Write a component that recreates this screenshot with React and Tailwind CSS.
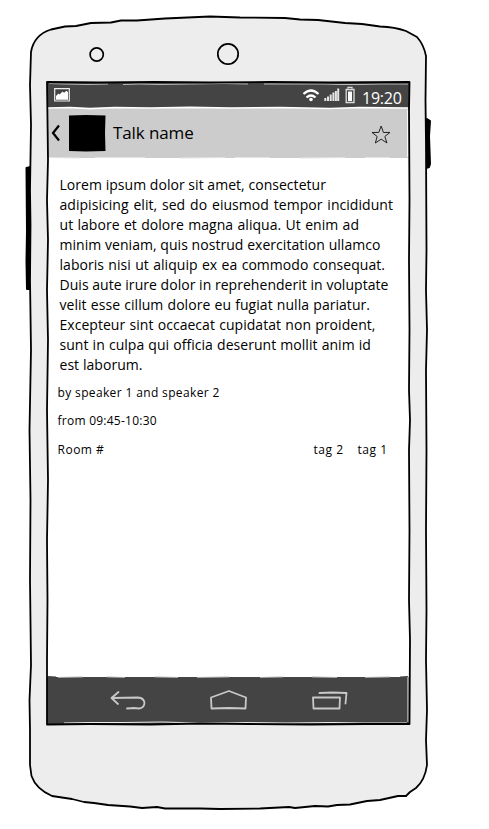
const BODY_LINES = [
  ["Lorem ipsum dolor sit amet, consectetur", "w-[266.5px]"],
  ["adipisicing elit, sed do eiusmod tempor incididunt", "w-[333.5px]"],
  ["ut labore et dolore magna aliqua. Ut enim ad", "w-[299.5px]"],
  ["minim veniam, quis nostrud exercitation ullamco", "w-[321px]"],
  ["laboris nisi ut aliquip ex ea commodo consequat.", "w-[325.5px]"],
  ["Duis aute irure dolor in reprehenderit in voluptate", "w-[329px]"],
  ["velit esse cillum dolore eu fugiat nulla pariatur.", "w-[310.5px]"],
  ["Excepteur sint occaecat cupidatat non proident,", "w-[316px]"],
  ["sunt in culpa qui officia deserunt mollit anim id", "w-[311.5px]"],
  ["est laborum.", "w-[83px]"],
];

// The phone's hand-drawn shell, side buttons and camera holes.
function PhoneShell() {
  return (
    <svg className="absolute inset-0" width="489" height="829" viewBox="0 0 489 829" fill="none" stroke="#000" strokeWidth="2" strokeLinejoin="round">
      <path d="M26.500 168l4-1v122l-3.500 0-.5-28 .5-30z" fill="#000" />
      <path d="M427 119l3 2-1 15 1 28-1 3-3 1z" fill="#000" />
      <path
        fill="#ededed"
        strokeWidth="1.8"
        d="M31 52C33 40 40 33 51 29.500L65 26.500L76 26L91 23L111 22.500L121 20.500L137 20.500L165 18.500L210 16.500L240 17.500L285 18L300 19.500L318 20L345 23L362 24L380 26.500Q395 27 406 31L417 37Q424 45 426 56L425.500 100L426 145L426.500 250L426 290L427 330L426 370L426.500 450L426 530L426.500 610L426 660L427 710L426 740L427 765Q425 780 416 788L410 792L406 796L398 796L380 800L367 801L350 804.500L337 805L328 806.500L315 806L295 808L289 807L260 808.500L220 809L200 808.500L165 808.500L157 807L142 808L130 806.500L108 805L94 803L84 802L72 799L52 796Q36 789 31.500 776L30 765L30 730L29.500 700L31 665L30 580L30.500 500L29.500 430L31 350L30 280L30.500 225L30 190L31 125L30 85Z"
      />
      <circle cx="96.700" cy="54.500" r="6.600" strokeWidth="1.700" />
      <circle cx="228" cy="54" r="10.200" strokeWidth="1.700" />
    </svg>
  );
}

// Sketchy outline and seams of the screen, drawn above its panels.
function ScreenOutline() {
  return (
    <svg className="pointer-events-none absolute inset-0" width="489" height="829" viewBox="0 0 489 829" fill="none" strokeLinejoin="round">
      <path stroke="#bbb" strokeWidth="1" d="M49 83.500l15 .5 24 .5 20-.5M123 84.500l16-.5 20 .5 30-.5 35-.5 24 .5M264 84l30 0 30 0 16 .5 20 0 20-.5 28 0" />
      <path stroke="#fff" strokeWidth="1.700" d="M48 108L70 107.500L90 108.700L115 107.500L150 108L190 107.300L230 108L280 107.500L330 108.500L360 107.500L408 108M408 110L408 157" />
      <path stroke="#e4e4e4" strokeWidth="1" d="M49 157.500L80 158M95 157.500L145 157.500M180 158L225 157.500M235 157.500L270 157.500M300 158L345 157.500M365 157.500L390 157.500" />
      <path stroke="#444" strokeWidth="1" d="M48 676.500L56 677M400 677L408 676.500" />
      <path stroke="#aaa" strokeWidth="1" d="M58 677.500L83 677M107 677L125 677.500M155 677L178 677.500M197 677.500L229 677M260 677.500L283 677M312 677L337 677.500M365 677.500L390 677" />
      <path stroke="#eee" strokeWidth="1" d="M64 723L90 722.500L122 722.500L162 722L201 723L245 722.500L286 723L332 722.500L362 723L407 723M408 677L408 722" />
      <path stroke="#000" strokeWidth="1.800" d="M47 82L100 82.500L155 82L210 82.500L270 82L330 82.500L409.500 82L409 110L409.500 200L409 260L409.500 330L409 390L410 420L409 450L409.500 530L409 600L410 640L409.500 724L365 724L310 724.500L250 724L200 723.500L150 724.500L90 724L47 724.500L47 660L47.500 600L47 540L48 480L47 410L48 340L47 290L48 240L47 200L48 160L47.500 120Z" />
    </svg>
  );
}

function PictureIcon() {
  return (
    <svg width="16" height="14" viewBox="0 0 16 14">
      <path d="M.7 .7h14.600v12.300H.7z" fill="none" stroke="#eee" strokeWidth="1.200" />
      <path d="M2 11.800V8L4.500 5.500l1.200 1L8.500 3.500l1.500 1.300 2.500-2 1.500 1.500v7.500z" fill="#fff" />
    </svg>
  );
}

function StatusIcons() {
  return (
    <svg width="54" height="20" viewBox="302 85 54 20" fill="none" stroke="#fff">
      <path strokeWidth="2.300" d="M303.500 94Q311 87 318.500 94M306.500 97.500Q311 93.500 315.500 97.500" />
      <circle cx="311" cy="99.500" r="1.800" fill="#fff" stroke="none" />
      <path stroke="#e4e4e4" strokeWidth="2" d="M325.300 101v-3M328 101v-4.500M330.700 101v-6.500M333.400 101v-8.500M335.900 101v-10M338.200 101v-12.500" />
      <path strokeWidth="1.300" stroke="#ddd" d="M348 88.500v-1.200h4v1.200M346.200 89.500h7.800v13h-7.800z" />
      <path d="M348 91.500h4v9.500h-4z" fill="#fff" stroke="none" />
    </svg>
  );
}

function NavIcons() {
  return (
    <svg width="362" height="46" viewBox="47 677 362 46" fill="none" stroke="#c8c8c8" strokeWidth="1.800" strokeLinejoin="round" strokeLinecap="round">
      <path d="M118.500 692L111.500 698L118 704M112 698L138 697.500Q144 698 144.500 703Q144 708 139 708.500L134 708L127 708.500" />
      <path d="M211 697.500L229 691L246 697.500L245.500 708.500L229 708L211.500 708.500Z" />
      <path d="M313 697.500L340 697.500L339.500 708.500L313.500 708.500ZM319.500 693L332 692.500L346.500 693L345.500 703.500" />
    </svg>
  );
}

// Spreads one line of copy over a fixed measure.
function Line({ text, width }) {
  return (
    <div className={`flex h-5 items-center justify-between whitespace-nowrap ${width}`}>
      {text.split(" ").map((word, i) => (
        <span key={i}>{word}</span>
      ))}
    </div>
  );
}

export default function App() {
  return (
    <div className="relative h-[829px] w-[489px] overflow-hidden bg-white pl-[47px] pt-[82px] font-['Open_Sans','Noto_Sans',sans-serif] text-black">
      <PhoneShell />
      <main className="relative flex h-[642px] w-[362px] flex-col bg-white">
        <div className="flex h-[26px] shrink-0 items-center justify-between bg-[#444] pl-[7px] pr-[7px] text-white">
          <PictureIcon />
          <div className="flex items-center gap-[6px]">
            <StatusIcons />
            <span className="flex h-5 w-[40px] items-center pt-[6px] text-base tracking-[-0.25px]">19:20</span>
          </div>
        </div>
        <header className="flex h-[50px] shrink-0 items-center bg-[#ccc] pl-1 pr-[18px]">
          <svg width="9" height="18" viewBox="0 0 9 18" fill="none" stroke="#000" strokeWidth="2.200">
            <path d="M8 1.500L2 9L8 16.500" />
          </svg>
          <svg className="ml-2" width="38" height="37" viewBox="0 0 38 37">
            <path d="M1 .5L18 0L37.500 .5L37 18L37.500 36L18 36.500L1 36L1 18Z" />
          </svg>
          <h1 className="ml-[7px] text-[17px] tracking-[-0.1px]">Talk name</h1>
          <svg className="ml-auto mt-[3px]" width="20" height="20" viewBox="0 0 20 20" fill="none" stroke="#222" strokeWidth="1">
            <path d="M10.200 1L12.400 7.500L19 7.400L13.800 11.500L16 18L10.200 14.200L4.300 18L6.200 11.500L1 7.500L7.800 7.400Z" />
          </svg>
        </header>
        <section className="grow">
          <div className="ml-[12.5px] mt-4 text-[14px] tracking-[0.04px]">
            {BODY_LINES.map(([text, width]) => (
              <Line key={text} text={text} width={width} />
            ))}
          </div>
          <div className="ml-[10.5px] text-[12px] tracking-[0.36px]">
            <p className="mt-[9px] flex h-5 items-center">by speaker 1 and speaker 2</p>
            <p className="mt-2 flex h-5 items-center tracking-[0.25px]">from 09:45-10:30</p>
            <div className="mt-[9px] flex h-5 w-[330px] items-center">
              <span className="tracking-[0.5px]">Room #</span>
              <span className="ml-auto tracking-[0.5px]">tag 2</span>
              <span className="ml-[14px] tracking-[0.5px]">tag 1</span>
            </div>
          </div>
        </section>
        <nav className="h-[47px] shrink-0 bg-[#444]">
          <NavIcons />
        </nav>
      </main>
      <ScreenOutline />
    </div>
  );
}
